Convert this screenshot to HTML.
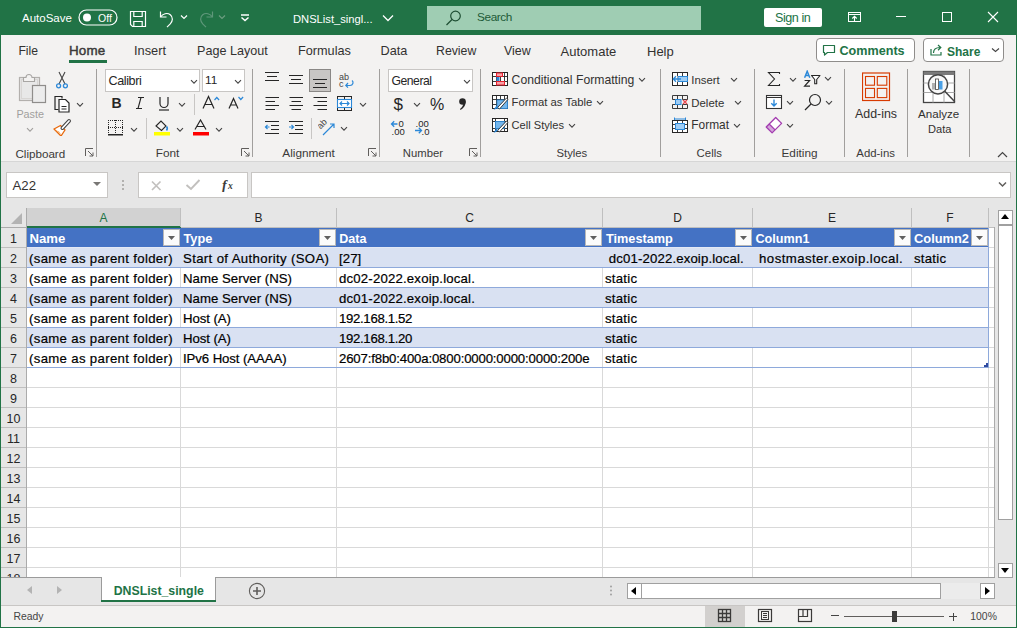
<!DOCTYPE html>
<html><head><meta charset="utf-8"><style>
html,body{margin:0;padding:0}
body{width:1017px;height:628px;position:relative;overflow:hidden;background:#f3f2f1;font-family:"Liberation Sans",sans-serif}
body>div,body>svg{position:absolute;margin:0}
body>div.c{-webkit-text-stroke:0.2px currentColor}
</style></head><body>
<div style="left:0px;top:0px;width:1017px;height:35px;background:#217346"></div>
<div style="left:22px;top:12.77px;font-size:11.5px;line-height:11.5px;color:#ffffff;font-weight:normal;white-space:pre;">AutoSave</div>
<svg style="left:78px;top:9px;" width="40" height="17" viewBox="0 0 40 17"><rect x="1" y="1" width="38" height="15" rx="7.5" fill="none" stroke="#fff" stroke-width="1.2"/><circle cx="9" cy="8.5" r="4" fill="#fff"/><text x="20" y="12.5" font-size="10.5" fill="#fff" font-family="Liberation Sans">Off</text></svg>
<svg style="left:129px;top:10px;" width="18" height="18" viewBox="0 0 18 18"><path d="M1.5 1.5h15v15h-13l-2-2z" fill="none" stroke="#fff" stroke-width="1.2"/><path d="M4.8 1.5v5h8.4v-5M4.8 16.5v-5h8.4v5" fill="none" stroke="#fff" stroke-width="1.2"/></svg>
<svg style="left:158px;top:10px;" width="18" height="18" viewBox="0 0 18 18"><path d="M2.5 1.5v5.5h6" fill="none" stroke="#fff" stroke-width="1.2"/><path d="M2.8 6.8c1.8-3 6.5-4.5 9.5-2s2.5 6.5 0 9l-3.3 3.3" fill="none" stroke="#fff" stroke-width="1.2"/></svg>
<svg style="left:180px;top:14px;" width="8" height="6" viewBox="0 0 8 6"><path d="M1 1.5l3 3 3-3" fill="none" stroke="#fff" stroke-width="1.2"/></svg>
<svg style="left:197px;top:10px;" width="18" height="18" viewBox="0 0 18 18"><path d="M15.5 1.5v5.5h-6" fill="none" stroke="#5f977a" stroke-width="1.2"/><path d="M15.2 6.8c-1.8-3-6.5-4.5-9.5-2s-2.5 6.5 0 9l3.3 3.3" fill="none" stroke="#5f977a" stroke-width="1.2"/></svg>
<svg style="left:218px;top:14px;" width="8" height="6" viewBox="0 0 8 6"><path d="M1 1.5l3 3 3-3" fill="none" stroke="#6c9d80" stroke-width="1.2"/></svg>
<svg style="left:240px;top:13px;" width="10" height="10" viewBox="0 0 10 10"><path d="M1 2h8" stroke="#fff" stroke-width="1.5"/><path d="M1.5 4.5l3.5 3 3.5-3" fill="none" stroke="#fff" stroke-width="1.5"/></svg>
<div style="left:293px;top:14.02px;font-size:11.2px;line-height:11.2px;color:#ffffff;font-weight:normal;white-space:pre;">DNSList_singl...</div>
<svg style="left:382px;top:14px;" width="12" height="8" viewBox="0 0 12 8"><path d="M1 1.5l5 5 5-5" fill="none" stroke="#fff" stroke-width="1.3"/></svg>
<div style="left:427px;top:6px;width:274px;height:24px;background:#9fcdb3"></div>
<svg style="left:445px;top:10px;" width="18" height="16" viewBox="0 0 18 16"><circle cx="10.5" cy="6" r="4.8" fill="none" stroke="#1e4d33" stroke-width="1.2"/><path d="M7 9.5l-5.5 5.5" stroke="#1e4d33" stroke-width="1.3"/></svg>
<div style="left:477px;top:12.01px;font-size:11.8px;line-height:11.8px;color:#1d5a37;font-weight:normal;white-space:pre;letter-spacing:-0.4px">Search</div>
<div style="left:764px;top:8px;width:58px;height:19px;background:#fff;border-radius:2px"></div>
<div style="left:775px;top:12.13px;font-size:12.6px;line-height:12.6px;color:#217346;font-weight:normal;white-space:pre;letter-spacing:-0.45px">Sign in</div>
<svg style="left:847px;top:11px;" width="15" height="12" viewBox="0 0 15 12"><rect x="1.5" y="1.5" width="12" height="9" fill="none" stroke="#fff" stroke-width="1"/><path d="M1.5 3.5h12" stroke="#fff" stroke-width="1"/><path d="M7.5 10v-4.5M5.3 7.5l2.2-2.2 2.2 2.2" fill="none" stroke="#fff" stroke-width="1.1"/></svg>
<div style="left:896px;top:16px;width:10px;height:1px;background:#fff"></div>
<div style="left:942px;top:12px;width:10px;height:10px;border:1px solid #fff;box-sizing:border-box"></div>
<svg style="left:987px;top:11px;" width="12" height="12" viewBox="0 0 12 12"><path d="M1 1l10 10M11 1L1 11" stroke="#fff" stroke-width="1.1"/></svg>
<div style="left:0px;top:35px;width:1px;height:593px;background:#217346"></div>
<div style="left:1016px;top:35px;width:1px;height:593px;background:#217346"></div>
<div style="left:0px;top:627px;width:1017px;height:1px;background:#217346"></div>
<div style="left:18.4px;top:45.27px;font-size:12.2px;line-height:12.2px;color:#323130;font-weight:normal;white-space:pre;">File</div>
<div style="left:69px;top:44.26px;font-size:13.4px;line-height:13.4px;color:#3b3a39;font-weight:normal;white-space:pre;-webkit-text-stroke:0.45px #3b3a39;letter-spacing:0.15px">Home</div>
<div style="left:134px;top:44.76px;font-size:12.8px;line-height:12.8px;color:#323130;font-weight:normal;white-space:pre;">Insert</div>
<div style="left:197px;top:44.93px;font-size:12.6px;line-height:12.6px;color:#323130;font-weight:normal;white-space:pre;">Page Layout</div>
<div style="left:298px;top:44.85px;font-size:12.7px;line-height:12.7px;color:#323130;font-weight:normal;white-space:pre;">Formulas</div>
<div style="left:380.5px;top:44.85px;font-size:12.7px;line-height:12.7px;color:#323130;font-weight:normal;white-space:pre;">Data</div>
<div style="left:436px;top:45.19px;font-size:12.3px;line-height:12.3px;color:#323130;font-weight:normal;white-space:pre;">Review</div>
<div style="left:504px;top:45.10px;font-size:12.4px;line-height:12.4px;color:#323130;font-weight:normal;white-space:pre;">View</div>
<div style="left:560.6px;top:44.60px;font-size:13px;line-height:13px;color:#323130;font-weight:normal;white-space:pre;">Automate</div>
<div style="left:647px;top:44.60px;font-size:13px;line-height:13px;color:#323130;font-weight:normal;white-space:pre;">Help</div>
<div style="left:69px;top:60px;width:38px;height:3px;background:#217346"></div>
<div style="left:816px;top:38px;width:98px;height:23px;border:1px solid #8f8d8b;border-radius:4px;background:#fff;box-sizing:border-box;width:99px;height:24px"></div>
<svg style="left:822px;top:44px;" width="14" height="12" viewBox="0 0 14 12"><path d="M1.5 1.5h11v7h-7l-3 2.5v-2.5h-1z" fill="none" stroke="#217346" stroke-width="1.2" stroke-linejoin="round"/></svg>
<div style="left:839.5px;top:45.33px;font-size:12.6px;line-height:12.6px;color:#217346;font-weight:bold;white-space:pre;">Comments</div>
<div style="left:923px;top:38px;width:81px;height:24px;border:1px solid #8f8d8b;border-radius:4px;background:#fff;box-sizing:border-box"></div>
<svg style="left:930px;top:44px;" width="14" height="12" viewBox="0 0 14 12"><path d="M1 5v6h10v-3" fill="none" stroke="#217346" stroke-width="1.2"/><path d="M3.5 9c0-4 3-5.5 6.5-5.5M8 1l2.8 2.6-2.8 2.6" fill="none" stroke="#217346" stroke-width="1.2"/></svg>
<div style="left:947px;top:45.84px;font-size:12px;line-height:12px;color:#217346;font-weight:bold;white-space:pre;">Share</div>
<svg style="left:991px;top:47px;" width="9" height="6" viewBox="0 0 9 6"><path d="M1 1.5l3.5 3 3.5-3" fill="none" stroke="#444" stroke-width="1.1"/></svg>
<div style="left:96px;top:69px;width:1px;height:88px;background:#a19f9d"></div>
<div style="left:252px;top:69px;width:1px;height:88px;background:#a19f9d"></div>
<div style="left:379px;top:69px;width:1px;height:88px;background:#a19f9d"></div>
<div style="left:480px;top:69px;width:1px;height:88px;background:#a19f9d"></div>
<div style="left:660px;top:69px;width:1px;height:88px;background:#a19f9d"></div>
<div style="left:754px;top:69px;width:1px;height:88px;background:#a19f9d"></div>
<div style="left:844px;top:69px;width:1px;height:88px;background:#a19f9d"></div>
<div style="left:907px;top:69px;width:1px;height:88px;background:#a19f9d"></div>
<div style="left:969px;top:69px;width:1px;height:88px;background:#a19f9d"></div>
<svg style="left:18px;top:72px;" width="30" height="32" viewBox="0 0 30 32"><rect x="1.5" y="5.5" width="20" height="23" fill="#e8e8e8" stroke="#b3b0ad" stroke-width="1.2"/><rect x="3.5" y="7.5" width="16" height="19" fill="none" stroke="#d8d6d4" stroke-width="1"/><path d="M5.5 9.5h11v-4h-2.5a3 3 0 0 0-6 0H5.5z" fill="#f3f2f1" stroke="#a8a6a4" stroke-width="1.1"/><rect x="14.5" y="13.5" width="13" height="17" fill="#ececec" stroke="#8f8d8b" stroke-width="1.2"/></svg>
<div style="left:16.4px;top:108.86px;font-size:10.8px;line-height:10.8px;color:#a19f9d;font-weight:normal;white-space:pre;">Paste</div>
<svg style="left:26px;top:127px;" width="8" height="6" viewBox="0 0 8 6"><path d="M1 1.2l3 3 3-3" fill="none" stroke="#a19f9d" stroke-width="1.1"/></svg>
<svg style="left:56px;top:71px;" width="12" height="18" viewBox="0 0 12 18"><path d="M3 1l6 12M9 1l-6 12" stroke="#444" stroke-width="1.1"/><circle cx="2.6" cy="14.8" r="2" fill="none" stroke="#2b88d8" stroke-width="1.3"/><circle cx="9.4" cy="14.8" r="2" fill="none" stroke="#2b88d8" stroke-width="1.3"/></svg>
<svg style="left:54px;top:95px;" width="17" height="18" viewBox="0 0 17 18"><path d="M8 3.5V1.5H1v13h3.5" fill="none" stroke="#262626" stroke-width="1.2"/><path d="M5 4.5h6.5l3.5 3.5V17H5z" fill="#fff" stroke="#262626" stroke-width="1.2"/><path d="M7.5 11.5h5M7.5 14h5" stroke="#262626" stroke-width="1"/></svg>
<svg style="left:76px;top:102px;" width="8" height="6" viewBox="0 0 8 6"><path d="M1 1.2l3 3 3-3" fill="none" stroke="#444" stroke-width="1.1"/></svg>
<svg style="left:53px;top:118px;" width="19" height="18" viewBox="0 0 19 18"><path d="M1 11l6.5-3.5 4.5 4.5-4 6z" fill="#fff" stroke="#e8690c" stroke-width="1.3" stroke-linejoin="round"/><path d="M2 11.8l4 1.8 2.5 3.5z" fill="#f3a85f"/><path d="M9.5 10l6.5-7" stroke="#444" stroke-width="4" stroke-linecap="round"/><path d="M9.5 10l6.5-7" stroke="#fff" stroke-width="1.8" stroke-linecap="round"/></svg>
<div style="left:15.4px;top:147.74px;font-size:11.65px;line-height:11.65px;color:#3b3a39;font-weight:normal;white-space:pre;">Clipboard</div>
<svg style="left:85px;top:148px;" width="9" height="9" viewBox="0 0 9 9"><path d="M0.5 8V0.5H8" fill="none" stroke="#605e5c" stroke-width="1"/><path d="M3 3l5 5M8 4.5V8H4.5" fill="none" stroke="#605e5c" stroke-width="1"/></svg>
<div style="left:105px;top:69px;width:95px;height:23px;background:#fff;border:1px solid #c8c6c4;box-sizing:border-box"></div>
<div style="left:108.5px;top:75.03px;font-size:12.6px;line-height:12.6px;color:#262626;font-weight:normal;white-space:pre;letter-spacing:-0.4px">Calibri</div>
<svg style="left:190px;top:79px;" width="8" height="6" viewBox="0 0 8 6"><path d="M1 1.2l3 3 3-3" fill="none" stroke="#444" stroke-width="1.1"/></svg>
<div style="left:202px;top:69px;width:43px;height:23px;background:#fff;border:1px solid #c8c6c4;box-sizing:border-box"></div>
<div style="left:205px;top:75.31px;font-size:11.8px;line-height:11.8px;color:#262626;font-weight:normal;white-space:pre;">11</div>
<svg style="left:234px;top:79px;" width="8" height="6" viewBox="0 0 8 6"><path d="M1 1.2l3 3 3-3" fill="none" stroke="#444" stroke-width="1.1"/></svg>
<svg style="left:111px;top:96px;" width="12" height="14" viewBox="0 0 12 14"><text x="0.5" y="12" font-family="Liberation Sans" font-weight="bold" font-size="14" fill="#262626">B</text></svg>
<svg style="left:135px;top:96px;" width="10" height="14" viewBox="0 0 10 14"><path d="M3 1.5h6M1 12.5h6M6 1.5l-3 11" fill="none" stroke="#262626" stroke-width="1.1"/></svg>
<svg style="left:158px;top:96px;" width="12" height="16" viewBox="0 0 12 16"><path d="M2 1v6.5a4 4 0 0 0 8 0V1" fill="none" stroke="#262626" stroke-width="1.2"/><path d="M1 14h10" stroke="#262626" stroke-width="1.2"/></svg>
<svg style="left:178px;top:102px;" width="8" height="6" viewBox="0 0 8 6"><path d="M1 1.2l3 3 3-3" fill="none" stroke="#444" stroke-width="1.1"/></svg>
<div style="left:194px;top:94px;width:1px;height:21px;background:#c8c6c4"></div>
<svg style="left:202px;top:95px;" width="18" height="15" viewBox="0 0 18 15"><path d="M1 13.5l5.5-12 5.5 12M3 9.5h7" fill="none" stroke="#262626" stroke-width="1.2"/><path d="M12.5 5l2.3-2.5 2.3 2.5" fill="none" stroke="#2b88d8" stroke-width="1.2"/></svg>
<svg style="left:228px;top:95px;" width="16" height="15" viewBox="0 0 16 15"><path d="M1 13.5l4.5-10 4.5 10M2.6 10h6" fill="none" stroke="#262626" stroke-width="1.2"/><path d="M10.5 2l2.3 2.5 2.3-2.5" fill="none" stroke="#2b88d8" stroke-width="1.2"/></svg>
<svg style="left:107px;top:119px;" width="17" height="17" viewBox="0 0 17 17"><g fill="#262626"><rect x="1" y="1" width="1" height="1"/><rect x="1" y="1" width="1" height="1"/><rect x="15" y="1" width="1" height="1"/><rect x="1" y="8" width="1" height="1"/><rect x="8" y="1" width="1" height="1"/><rect x="3" y="1" width="1" height="1"/><rect x="1" y="3" width="1" height="1"/><rect x="15" y="3" width="1" height="1"/><rect x="3" y="8" width="1" height="1"/><rect x="8" y="3" width="1" height="1"/><rect x="5" y="1" width="1" height="1"/><rect x="1" y="5" width="1" height="1"/><rect x="15" y="5" width="1" height="1"/><rect x="5" y="8" width="1" height="1"/><rect x="8" y="5" width="1" height="1"/><rect x="7" y="1" width="1" height="1"/><rect x="1" y="7" width="1" height="1"/><rect x="15" y="7" width="1" height="1"/><rect x="7" y="8" width="1" height="1"/><rect x="8" y="7" width="1" height="1"/><rect x="9" y="1" width="1" height="1"/><rect x="1" y="9" width="1" height="1"/><rect x="15" y="9" width="1" height="1"/><rect x="9" y="8" width="1" height="1"/><rect x="8" y="9" width="1" height="1"/><rect x="11" y="1" width="1" height="1"/><rect x="1" y="11" width="1" height="1"/><rect x="15" y="11" width="1" height="1"/><rect x="11" y="8" width="1" height="1"/><rect x="8" y="11" width="1" height="1"/><rect x="13" y="1" width="1" height="1"/><rect x="1" y="13" width="1" height="1"/><rect x="15" y="13" width="1" height="1"/><rect x="13" y="8" width="1" height="1"/><rect x="8" y="13" width="1" height="1"/><rect x="15" y="1" width="1" height="1"/><rect x="1" y="15" width="1" height="1"/><rect x="15" y="15" width="1" height="1"/><rect x="15" y="8" width="1" height="1"/><rect x="8" y="15" width="1" height="1"/></g><rect x="1" y="15" width="15" height="1.5" fill="#262626"/></svg>
<svg style="left:130px;top:127px;" width="8" height="6" viewBox="0 0 8 6"><path d="M1 1.2l3 3 3-3" fill="none" stroke="#444" stroke-width="1.1"/></svg>
<div style="left:146px;top:118px;width:1px;height:21px;background:#c8c6c4"></div>
<svg style="left:153px;top:120px;" width="18" height="16" viewBox="0 0 18 16"><path d="M3 6l5-5 5 5-4.5 4.5z" fill="none" stroke="#262626" stroke-width="1.1"/><path d="M13.5 6.5c1 1 1 2.5 0 4" fill="none" stroke="#2b88d8" stroke-width="1.6"/><rect x="1" y="12" width="16" height="3.5" fill="#ffff00"/></svg>
<svg style="left:176px;top:127px;" width="8" height="6" viewBox="0 0 8 6"><path d="M1 1.2l3 3 3-3" fill="none" stroke="#444" stroke-width="1.1"/></svg>
<svg style="left:192px;top:119px;" width="18" height="17" viewBox="0 0 18 17"><path d="M3 10.5l5.5-9.5 5.5 9.5M5 7.5h7" fill="none" stroke="#262626" stroke-width="1.2"/><rect x="1" y="13" width="16" height="3.5" fill="#ff0000"/></svg>
<svg style="left:215px;top:127px;" width="8" height="6" viewBox="0 0 8 6"><path d="M1 1.2l3 3 3-3" fill="none" stroke="#444" stroke-width="1.1"/></svg>
<div style="left:155.7px;top:147.61px;font-size:11.8px;line-height:11.8px;color:#3b3a39;font-weight:normal;white-space:pre;">Font</div>
<svg style="left:241px;top:148px;" width="9" height="9" viewBox="0 0 9 9"><path d="M0.5 8V0.5H8" fill="none" stroke="#605e5c" stroke-width="1"/><path d="M3 3l5 5M8 4.5V8H4.5" fill="none" stroke="#605e5c" stroke-width="1"/></svg>
<svg style="left:264px;top:70px;" width="16" height="16" viewBox="0 0 16 16"><path d="M1 2.5h14" stroke="#262626" stroke-width="1"/><path d="M3 6.5h10" stroke="#262626" stroke-width="1"/><path d="M1 10.5h14" stroke="#262626" stroke-width="1"/></svg>
<svg style="left:288px;top:70px;" width="16" height="16" viewBox="0 0 16 16"><path d="M1 5.5h14" stroke="#262626" stroke-width="1"/><path d="M3 9.5h10" stroke="#262626" stroke-width="1"/><path d="M1 13.5h14" stroke="#262626" stroke-width="1"/></svg>
<div style="left:309px;top:69px;width:22px;height:23px;background:#c8c6c4;border:1px solid #8a8886;box-sizing:border-box"></div>
<svg style="left:312px;top:72px;" width="16" height="16" viewBox="0 0 16 16"><path d="M1 7.5h14" stroke="#262626" stroke-width="1"/><path d="M3 11.5h10" stroke="#262626" stroke-width="1"/><path d="M1 15.5h14" stroke="#262626" stroke-width="1"/></svg>
<svg style="left:338px;top:72px;" width="17" height="17" viewBox="0 0 17 17"><text x="1" y="7.5" font-family="Liberation Sans" font-size="9" fill="#444">ab</text><text x="1" y="15" font-family="Liberation Sans" font-size="9" fill="#444">c</text><path d="M14 8.5c2 1.5 1 5-2 5H8M10 11l-2.2 2.5 2.2 2.2" fill="none" stroke="#2b88d8" stroke-width="1.2"/></svg>
<svg style="left:264px;top:95px;" width="16" height="16" viewBox="0 0 16 16"><path d="M1.5 2.5h13.5" stroke="#262626" stroke-width="1"/><path d="M1.5 6.5h9.5" stroke="#262626" stroke-width="1"/><path d="M1.5 10.5h13.5" stroke="#262626" stroke-width="1"/><path d="M1.5 14.5h9.5" stroke="#262626" stroke-width="1"/></svg>
<svg style="left:288px;top:95px;" width="16" height="16" viewBox="0 0 16 16"><path d="M1.5 2.5h13.5" stroke="#262626" stroke-width="1"/><path d="M3.5 6.5h9.5" stroke="#262626" stroke-width="1"/><path d="M1.5 10.5h13.5" stroke="#262626" stroke-width="1"/><path d="M3.5 14.5h9.5" stroke="#262626" stroke-width="1"/></svg>
<svg style="left:312px;top:95px;" width="16" height="16" viewBox="0 0 16 16"><path d="M1.5 2.5h13.5" stroke="#262626" stroke-width="1"/><path d="M5.5 6.5h9.5" stroke="#262626" stroke-width="1"/><path d="M1.5 10.5h13.5" stroke="#262626" stroke-width="1"/><path d="M5.5 14.5h9.5" stroke="#262626" stroke-width="1"/></svg>
<svg style="left:336px;top:95px;" width="17" height="17" viewBox="0 0 17 17"><rect x="1.5" y="1.5" width="14" height="14" fill="none" stroke="#262626" stroke-width="1"/><path d="M1.5 4.5h14M1.5 12.5h14M8.5 1.5v3M8.5 12.5v3" stroke="#262626" stroke-width="1"/><rect x="1.5" y="4.5" width="14" height="8" fill="#fff" stroke="#2b88d8" stroke-width="1.1"/><path d="M4 8.5h9M6 6.5l-2 2 2 2M11 6.5l2 2-2 2" fill="none" stroke="#2b88d8" stroke-width="1.2"/></svg>
<svg style="left:359px;top:102px;" width="8" height="6" viewBox="0 0 8 6"><path d="M1 1.2l3 3 3-3" fill="none" stroke="#444" stroke-width="1.1"/></svg>
<svg style="left:264px;top:119px;" width="16" height="16" viewBox="0 0 16 16"><path d="M1 2.5h14M7 6.5h8M7 10.5h8M1 14.5h14" stroke="#262626" stroke-width="1.1"/><path d="M5.5 8H1.5M3.5 6l-2 2 2 2" fill="none" stroke="#2b88d8" stroke-width="1.2"/></svg>
<svg style="left:288px;top:119px;" width="16" height="16" viewBox="0 0 16 16"><path d="M1 2.5h14M7 6.5h8M7 10.5h8M1 14.5h14" stroke="#262626" stroke-width="1.1"/><path d="M1 8h4.5M3.5 6l2 2-2 2" fill="none" stroke="#2b88d8" stroke-width="1.2"/></svg>
<div style="left:311px;top:118px;width:1px;height:21px;background:#c8c6c4"></div>
<svg style="left:318px;top:119px;" width="18" height="17" viewBox="0 0 18 17"><text x="0" y="0" font-family="Liberation Sans" font-size="9" fill="#444" transform="translate(2.5,10.5) rotate(-45)">ab</text><path d="M5 16l11-11M12 5h4v4" fill="none" stroke="#2b88d8" stroke-width="1.2"/></svg>
<svg style="left:340px;top:126px;" width="8" height="6" viewBox="0 0 8 6"><path d="M1 1.2l3 3 3-3" fill="none" stroke="#444" stroke-width="1.1"/></svg>
<div style="left:282.3px;top:147.61px;font-size:11.8px;line-height:11.8px;color:#3b3a39;font-weight:normal;white-space:pre;">Alignment</div>
<svg style="left:368px;top:148px;" width="9" height="9" viewBox="0 0 9 9"><path d="M0.5 8V0.5H8" fill="none" stroke="#605e5c" stroke-width="1"/><path d="M3 3l5 5M8 4.5V8H4.5" fill="none" stroke="#605e5c" stroke-width="1"/></svg>
<div style="left:388px;top:69px;width:85px;height:23px;background:#fff;border:1px solid #c8c6c4;box-sizing:border-box"></div>
<div style="left:391.4px;top:74.67px;font-size:12.2px;line-height:12.2px;color:#262626;font-weight:normal;white-space:pre;letter-spacing:-0.45px">General</div>
<svg style="left:463px;top:79px;" width="8" height="6" viewBox="0 0 8 6"><path d="M1 1.2l3 3 3-3" fill="none" stroke="#444" stroke-width="1.1"/></svg>
<svg style="left:393px;top:95px;" width="12" height="18" viewBox="0 0 12 18"><text x="0.5" y="14.5" font-family="Liberation Sans" font-size="17" fill="#262626">$</text></svg>
<svg style="left:413px;top:102px;" width="8" height="6" viewBox="0 0 8 6"><path d="M1 1.2l3 3 3-3" fill="none" stroke="#444" stroke-width="1.1"/></svg>
<svg style="left:430px;top:96px;" width="17" height="16" viewBox="0 0 17 16"><text x="0" y="14" font-family="Liberation Sans" font-size="16" fill="#262626">%</text></svg>
<svg style="left:457px;top:97px;" width="11" height="15" viewBox="0 0 11 15"><circle cx="5.5" cy="4.5" r="3.3" fill="#262626"/><path d="M8.6 4.5c0.3 3.5-1.5 6.5-5 8.5l-0.6-0.9c2.5-1.8 3.5-4 3.2-6.5z" fill="#262626"/></svg>
<svg style="left:390px;top:118px;" width="18" height="17" viewBox="0 0 18 17"><path d="M1.5 6h6M4.2 3.3L1.5 6l2.7 2.7" fill="none" stroke="#2b88d8" stroke-width="1.3"/><text x="8.5" y="9" font-family="Liberation Sans" font-size="9.5" fill="#262626">0</text><text x="1.5" y="16.5" font-family="Liberation Sans" font-size="9.5" fill="#262626">.00</text></svg>
<svg style="left:414px;top:118px;" width="18" height="17" viewBox="0 0 18 17"><text x="1.5" y="8.5" font-family="Liberation Sans" font-size="9.5" fill="#262626">.00</text><path d="M1 12.5h6.5M4.8 9.8l2.7 2.7-2.7 2.7" fill="none" stroke="#2b88d8" stroke-width="1.3"/><text x="7.5" y="16.5" font-family="Liberation Sans" font-size="9.5" fill="#262626">.0</text></svg>
<div style="left:402.8px;top:148.03px;font-size:11.3px;line-height:11.3px;color:#3b3a39;font-weight:normal;white-space:pre;">Number</div>
<svg style="left:469px;top:148px;" width="9" height="9" viewBox="0 0 9 9"><path d="M0.5 8V0.5H8" fill="none" stroke="#605e5c" stroke-width="1"/><path d="M3 3l5 5M8 4.5V8H4.5" fill="none" stroke="#605e5c" stroke-width="1"/></svg>
<svg style="left:492px;top:72px;" width="17" height="15" viewBox="0 0 17 15"><rect x="0.5" y="0.5" width="15" height="13" fill="#fff" stroke="#262626" stroke-width="1"/><path d="M0.5 4.5h15M0.5 9.5h15M4.5 0.5v13M8.5 0.5v13M12.5 0.5v13" stroke="#262626" stroke-width="0.9"/><rect x="4.5" y="1" width="6" height="3.5" fill="#f7a1a7" stroke="#e8212e" stroke-width="1"/><rect x="4.5" y="5" width="3" height="4" fill="#2b88d8"/><rect x="4.5" y="9.5" width="8" height="3.5" fill="#f7a1a7" stroke="#e8212e" stroke-width="1"/></svg>
<div style="left:511.6px;top:73.87px;font-size:12.2px;line-height:12.2px;color:#323130;font-weight:normal;white-space:pre;">Conditional Formatting</div>
<svg style="left:638px;top:77px;" width="8" height="6" viewBox="0 0 8 6"><path d="M1 1.2l3 3 3-3" fill="none" stroke="#444" stroke-width="1.1"/></svg>
<svg style="left:492px;top:95px;" width="17" height="15" viewBox="0 0 17 15"><rect x="0.5" y="0.5" width="15" height="13" fill="#fff" stroke="#262626" stroke-width="1"/><path d="M0.5 4.5h15M0.5 9.5h15M4.5 0.5v13M8.5 0.5v13M12.5 0.5v13" stroke="#262626" stroke-width="0.9"/><rect x="5" y="5" width="10.5" height="8.5" fill="#74b6ec" stroke="#2b88d8" stroke-width="0.8"/><path d="M5.5 12.5l9-9.5 1.5 1.3-8.5 9.7z" fill="#fff" stroke="#262626" stroke-width="0.9"/><path d="M1.5 14.5c1.5 0 3-0.5 4.5-2.5l-1.5-1.3c-1.5 1.3-1.5 3-3 3.8z" fill="#2b88d8"/></svg>
<div style="left:511.6px;top:97.03px;font-size:11.3px;line-height:11.3px;color:#323130;font-weight:normal;white-space:pre;">Format as Table</div>
<svg style="left:596px;top:100px;" width="8" height="6" viewBox="0 0 8 6"><path d="M1 1.2l3 3 3-3" fill="none" stroke="#444" stroke-width="1.1"/></svg>
<svg style="left:492px;top:118px;" width="17" height="15" viewBox="0 0 17 15"><rect x="0.5" y="0.5" width="15" height="13" fill="#fff" stroke="#262626" stroke-width="1"/><path d="M0.5 3.5h15M0.5 10.5h15M3.5 0.5v13M12.5 0.5v13" stroke="#262626" stroke-width="0.9"/><rect x="3.5" y="3.5" width="9" height="7" fill="#74b6ec" stroke="#2b88d8" stroke-width="0.8"/><path d="M5.5 12.5l9-9.5 1.5 1.3-8.5 9.7z" fill="#fff" stroke="#262626" stroke-width="0.9"/><path d="M1.5 14.5c1.5 0 3-0.5 4.5-2.5l-1.5-1.3c-1.5 1.3-1.5 3-3 3.8z" fill="#2b88d8"/></svg>
<div style="left:511.6px;top:120.40px;font-size:11.1px;line-height:11.1px;color:#323130;font-weight:normal;white-space:pre;">Cell Styles</div>
<svg style="left:568px;top:123px;" width="8" height="6" viewBox="0 0 8 6"><path d="M1 1.2l3 3 3-3" fill="none" stroke="#444" stroke-width="1.1"/></svg>
<div style="left:556.5px;top:148.03px;font-size:11.3px;line-height:11.3px;color:#3b3a39;font-weight:normal;white-space:pre;">Styles</div>
<svg style="left:672px;top:72px;" width="17" height="15" viewBox="0 0 17 15"><rect x="0.5" y="0.5" width="15" height="13" fill="#fff" stroke="#262626" stroke-width="1"/><path d="M0.5 4.5h15M0.5 9.5h15M5.5 0.5v13M10.5 0.5v13" stroke="#262626" stroke-width="0.9"/><rect x="6" y="4.5" width="9.5" height="5" fill="#9fcdf5" stroke="#2b88d8" stroke-width="1"/><rect x="1" y="4" width="4.5" height="6" fill="#fff"/><path d="M1 7h8M4 4.3L1.3 7 4 9.7" fill="none" stroke="#2b88d8" stroke-width="1.3"/></svg>
<div style="left:691.3px;top:75.15px;font-size:11.4px;line-height:11.4px;color:#323130;font-weight:normal;white-space:pre;">Insert</div>
<svg style="left:730px;top:77px;" width="8" height="6" viewBox="0 0 8 6"><path d="M1 1.2l3 3 3-3" fill="none" stroke="#444" stroke-width="1.1"/></svg>
<svg style="left:672px;top:95px;" width="17" height="15" viewBox="0 0 17 15"><path d="M0.5 4.5V0.5h15v4M0.5 9.5v4h15v-4M0.5 4.5h4M0.5 9.5h4M5.5 0.5v4M10.5 0.5v4M5.5 9.5v4M10.5 9.5v4M10.5 4.5h5M10.5 9.5h5" fill="none" stroke="#262626" stroke-width="0.9"/><rect x="3.5" y="4.5" width="5.5" height="5" fill="#9fcdf5" stroke="#2b88d8" stroke-width="1"/><path d="M11 5l4 4M15 5l-4 4" stroke="#e8484f" stroke-width="1.2"/></svg>
<div style="left:691.3px;top:97.65px;font-size:11.4px;line-height:11.4px;color:#323130;font-weight:normal;white-space:pre;">Delete</div>
<svg style="left:734px;top:100px;" width="8" height="6" viewBox="0 0 8 6"><path d="M1 1.2l3 3 3-3" fill="none" stroke="#444" stroke-width="1.1"/></svg>
<svg style="left:672px;top:117px;" width="17" height="17" viewBox="0 0 17 17"><path d="M3 2h10M2.5 0.5v3M13.5 0.5v3" fill="none" stroke="#2b88d8" stroke-width="1"/><rect x="0.5" y="3.5" width="15" height="12" fill="#fff" stroke="#262626" stroke-width="1"/><path d="M0.5 7.5h15M0.5 11.5h15M5.5 3.5v12M10.5 3.5v12" stroke="#262626" stroke-width="0.9"/><rect x="3.5" y="6.5" width="9" height="6" fill="#9fcdf5" stroke="#2b88d8" stroke-width="1"/></svg>
<div style="left:691.3px;top:119.53px;font-size:11.9px;line-height:11.9px;color:#323130;font-weight:normal;white-space:pre;">Format</div>
<svg style="left:733px;top:123px;" width="8" height="6" viewBox="0 0 8 6"><path d="M1 1.2l3 3 3-3" fill="none" stroke="#444" stroke-width="1.1"/></svg>
<div style="left:696.6px;top:147.95px;font-size:11.4px;line-height:11.4px;color:#3b3a39;font-weight:normal;white-space:pre;">Cells</div>
<svg style="left:767px;top:71px;" width="14" height="16" viewBox="0 0 14 16"><path d="M12.5 3V1.5h-11l6 6.5-6 6.5h11V13" fill="none" stroke="#262626" stroke-width="1.1"/></svg>
<svg style="left:789px;top:77px;" width="8" height="6" viewBox="0 0 8 6"><path d="M1 1.2l3 3 3-3" fill="none" stroke="#444" stroke-width="1.1"/></svg>
<svg style="left:803px;top:70px;" width="19" height="18" viewBox="0 0 19 18"><path d="M1.6 7.8L4.2 1.3l2.6 6.5M2.6 5.6h3.2" fill="none" stroke="#2b88d8" stroke-width="1.5"/><path d="M1.6 10.5h5L1.6 16.2h5.4" fill="none" stroke="#262626" stroke-width="1.2"/><path d="M8.5 5.5h8.5l-3.3 4v4.3h-2v-4.3z" fill="#fff" stroke="#262626" stroke-width="1.1" stroke-linejoin="round"/></svg>
<svg style="left:824px;top:76px;" width="8" height="6" viewBox="0 0 8 6"><path d="M1 1.2l3 3 3-3" fill="none" stroke="#444" stroke-width="1.1"/></svg>
<svg style="left:765px;top:94px;" width="18" height="16" viewBox="0 0 18 16"><rect x="1.5" y="1.5" width="15" height="13" fill="#fff" stroke="#333" stroke-width="1.1"/><path d="M1.5 3.5h15" stroke="#333" stroke-width="1"/><path d="M9 5.5v6.5M6.3 9.3L9 12l2.7-2.7" fill="none" stroke="#2b88d8" stroke-width="1.4"/></svg>
<svg style="left:786px;top:100px;" width="8" height="6" viewBox="0 0 8 6"><path d="M1 1.2l3 3 3-3" fill="none" stroke="#444" stroke-width="1.1"/></svg>
<svg style="left:804px;top:93px;" width="18" height="18" viewBox="0 0 18 18"><circle cx="11" cy="7" r="5.5" fill="none" stroke="#262626" stroke-width="1.2"/><path d="M7 11l-6 6" stroke="#262626" stroke-width="1.3"/></svg>
<svg style="left:825px;top:100px;" width="8" height="6" viewBox="0 0 8 6"><path d="M1 1.2l3 3 3-3" fill="none" stroke="#444" stroke-width="1.1"/></svg>
<svg style="left:765px;top:116px;" width="18" height="18" viewBox="0 0 18 18"><path d="M1.2 11L10.7 1.5 16.6 7.4 7.1 16.9z" fill="#fff"/><path d="M1.2 11L4.2 8 10.1 13.9 7.1 16.9z" fill="#d3a5da"/><path d="M1.2 11L10.7 1.5 16.6 7.4 7.1 16.9zM4.2 8l5.9 5.9" fill="none" stroke="#a33cb0" stroke-width="1.3" stroke-linejoin="round"/></svg>
<svg style="left:786px;top:123px;" width="8" height="6" viewBox="0 0 8 6"><path d="M1 1.2l3 3 3-3" fill="none" stroke="#444" stroke-width="1.1"/></svg>
<div style="left:781.5px;top:147.51px;font-size:11.8px;line-height:11.8px;color:#3b3a39;font-weight:normal;white-space:pre;">Editing</div>
<svg style="left:862px;top:72px;" width="29" height="30" viewBox="0 0 29 30"><rect x="0.5" y="1" width="27" height="27.5" fill="none" stroke="#d83b01" stroke-width="1.2"/><rect x="3.5" y="4.5" width="9" height="8.7" fill="none" stroke="#d83b01" stroke-width="1.1"/><rect x="15.3" y="4.5" width="9.5" height="8.7" fill="none" stroke="#d83b01" stroke-width="1.1"/><rect x="3.5" y="16.4" width="9" height="9.2" fill="none" stroke="#d83b01" stroke-width="1.1"/><rect x="15.3" y="16.4" width="9.5" height="9.2" fill="none" stroke="#d83b01" stroke-width="1.1"/></svg>
<div style="left:855px;top:107.80px;font-size:12.4px;line-height:12.4px;color:#323130;font-weight:normal;white-space:pre;">Add-ins</div>
<div style="left:856.3px;top:148.25px;font-size:11.4px;line-height:11.4px;color:#3b3a39;font-weight:normal;white-space:pre;">Add-ins</div>
<svg style="left:922px;top:70px;" width="34" height="34" viewBox="0 0 34 34"><rect x="1.5" y="1.5" width="31" height="31" fill="#fff" stroke="#444" stroke-width="1.3"/><rect x="1.5" y="1.5" width="31" height="3.5" fill="#7a7a7a"/><path d="M1.5 13h31M1.5 22.5h31M11 5v27.5M22 5v27.5" stroke="#a8a8a8" stroke-width="1"/><circle cx="16" cy="14.3" r="9.6" fill="#f7f7f7" stroke="#444" stroke-width="1.5"/><rect x="10" y="13" width="3" height="6.5" fill="#b0b0b0"/><rect x="13.5" y="9" width="3" height="10.5" fill="#fff" stroke="#444" stroke-width="0.8"/><rect x="17" y="11" width="3.5" height="8.5" fill="#4aa0e6"/><path d="M22.8 21.3l10 10.5" stroke="#444" stroke-width="1.5"/></svg>
<div style="left:918px;top:108.48px;font-size:11.6px;line-height:11.6px;color:#323130;font-weight:normal;white-space:pre;">Analyze</div>
<div style="left:928px;top:124.10px;font-size:11.1px;line-height:11.1px;color:#323130;font-weight:normal;white-space:pre;">Data</div>
<svg style="left:997px;top:151px;" width="11" height="7" viewBox="0 0 11 7"><path d="M1 6l4.5-4.5L10 6" fill="none" stroke="#444" stroke-width="1.2"/></svg>
<div style="left:1px;top:161px;width:1015px;height:1px;background:#d6d6d6"></div>
<div style="left:1px;top:162px;width:1015px;height:66px;background:#e6e6e6"></div>
<div style="left:1px;top:228px;width:26px;height:350px;background:#e6e6e6"></div>
<div style="left:6px;top:172px;width:102px;height:26px;background:#fff;border:1px solid #c8c6c4;box-sizing:border-box"></div>
<div style="left:12.5px;top:178.83px;font-size:13.2px;line-height:13.2px;color:#323130;font-weight:normal;white-space:pre;">A22</div>
<svg style="left:93px;top:182px;" width="9" height="5" viewBox="0 0 9 5"><path d="M0 0h8l-4 4z" fill="#797775"/></svg>
<svg style="left:121px;top:179px;" width="4" height="12" viewBox="0 0 4 12"><circle cx="2" cy="2" r="1" fill="#a19f9d"/><circle cx="2" cy="6" r="1" fill="#a19f9d"/><circle cx="2" cy="10" r="1" fill="#a19f9d"/></svg>
<div style="left:138px;top:172px;width:110px;height:26px;background:#fff;border:1px solid #c8c6c4;box-sizing:border-box"></div>
<svg style="left:150px;top:180px;" width="14" height="12" viewBox="0 0 14 12"><path d="M2 1.5l8.5 8.5M10.5 1.5l-8.5 8.5" stroke="#c2c0be" stroke-width="1.7"/></svg>
<svg style="left:185px;top:179px;" width="16" height="12" viewBox="0 0 16 12"><path d="M1.5 6l4.5 4 8.5-9" fill="none" stroke="#c2c0be" stroke-width="1.9"/></svg>
<svg style="left:221px;top:176px;" width="16" height="16" viewBox="0 0 16 16"><text x="1" y="13.5" font-family="Liberation Serif" font-style="italic" font-weight="bold" font-size="14" fill="#3b3a39">f</text><text x="7" y="12.5" font-family="Liberation Serif" font-style="italic" font-weight="bold" font-size="9.5" fill="#3b3a39">x</text></svg>
<div style="left:251px;top:172px;width:760px;height:26px;background:#fff;border:1px solid #c8c6c4;box-sizing:border-box"></div>
<svg style="left:998px;top:181px;" width="9" height="7" viewBox="0 0 9 7"><path d="M1 1.5l3.5 3.5 3.5-3.5" fill="none" stroke="#605e5c" stroke-width="1.5"/></svg>
<div style="left:27px;top:228px;width:967px;height:349px;background:#fff"></div>
<svg style="left:10px;top:213px;" width="13" height="12" viewBox="0 0 13 12"><path d="M12 0v11H1z" fill="#b3b3b3"/></svg>
<div style="left:27px;top:208px;width:153px;height:19px;background:#d2d2d2"></div>
<div style="left:27px;top:226px;width:154px;height:2px;background:#217346"></div>
<div style="left:180px;top:208px;width:1px;height:19px;background:#bfbfbf"></div>
<div style="left:336px;top:208px;width:1px;height:19px;background:#bfbfbf"></div>
<div style="left:602px;top:208px;width:1px;height:19px;background:#bfbfbf"></div>
<div style="left:752px;top:208px;width:1px;height:19px;background:#bfbfbf"></div>
<div style="left:911px;top:208px;width:1px;height:19px;background:#bfbfbf"></div>
<div style="left:988px;top:208px;width:1px;height:19px;background:#bfbfbf"></div>
<div style="left:26px;top:208px;width:1px;height:369px;background:#ababab"></div>
<div style="left:994px;top:227px;width:1px;height:350px;background:#ababab"></div>
<div style="left:1px;top:227px;width:26px;height:1px;background:#ababab"></div>
<div style="left:181px;top:227px;width:813px;height:1px;background:#bfbfbf"></div>
<div style="left:27px;top:212.44px;width:153px;text-align:center;font-size:12px;line-height:12px;color:#217346">A</div>
<div style="left:181px;top:212.44px;width:155px;text-align:center;font-size:12px;line-height:12px;color:#262626">B</div>
<div style="left:337px;top:212.44px;width:265px;text-align:center;font-size:12px;line-height:12px;color:#262626">C</div>
<div style="left:603px;top:212.44px;width:149px;text-align:center;font-size:12px;line-height:12px;color:#262626">D</div>
<div style="left:753px;top:212.44px;width:158px;text-align:center;font-size:12px;line-height:12px;color:#262626">E</div>
<div style="left:912px;top:212.44px;width:76px;text-align:center;font-size:12px;line-height:12px;color:#262626">F</div>
<div style="left:1px;top:233.02px;width:25px;text-align:center;font-size:12.5px;line-height:12.5px;color:#262626">1</div>
<div style="left:1px;top:247px;width:25px;height:1px;background:#bfbfbf"></div>
<div style="left:1px;top:253.02px;width:25px;text-align:center;font-size:12.5px;line-height:12.5px;color:#262626">2</div>
<div style="left:1px;top:267px;width:25px;height:1px;background:#bfbfbf"></div>
<div style="left:1px;top:273.02px;width:25px;text-align:center;font-size:12.5px;line-height:12.5px;color:#262626">3</div>
<div style="left:1px;top:287px;width:25px;height:1px;background:#bfbfbf"></div>
<div style="left:1px;top:293.02px;width:25px;text-align:center;font-size:12.5px;line-height:12.5px;color:#262626">4</div>
<div style="left:1px;top:307px;width:25px;height:1px;background:#bfbfbf"></div>
<div style="left:1px;top:313.02px;width:25px;text-align:center;font-size:12.5px;line-height:12.5px;color:#262626">5</div>
<div style="left:1px;top:327px;width:25px;height:1px;background:#bfbfbf"></div>
<div style="left:1px;top:333.02px;width:25px;text-align:center;font-size:12.5px;line-height:12.5px;color:#262626">6</div>
<div style="left:1px;top:347px;width:25px;height:1px;background:#bfbfbf"></div>
<div style="left:1px;top:353.02px;width:25px;text-align:center;font-size:12.5px;line-height:12.5px;color:#262626">7</div>
<div style="left:1px;top:367px;width:25px;height:1px;background:#bfbfbf"></div>
<div style="left:1px;top:373.02px;width:25px;text-align:center;font-size:12.5px;line-height:12.5px;color:#262626">8</div>
<div style="left:1px;top:387px;width:25px;height:1px;background:#bfbfbf"></div>
<div style="left:1px;top:393.02px;width:25px;text-align:center;font-size:12.5px;line-height:12.5px;color:#262626">9</div>
<div style="left:1px;top:407px;width:25px;height:1px;background:#bfbfbf"></div>
<div style="left:1px;top:413.02px;width:25px;text-align:center;font-size:12.5px;line-height:12.5px;color:#262626">10</div>
<div style="left:1px;top:427px;width:25px;height:1px;background:#bfbfbf"></div>
<div style="left:1px;top:433.02px;width:25px;text-align:center;font-size:12.5px;line-height:12.5px;color:#262626">11</div>
<div style="left:1px;top:447px;width:25px;height:1px;background:#bfbfbf"></div>
<div style="left:1px;top:453.02px;width:25px;text-align:center;font-size:12.5px;line-height:12.5px;color:#262626">12</div>
<div style="left:1px;top:467px;width:25px;height:1px;background:#bfbfbf"></div>
<div style="left:1px;top:473.02px;width:25px;text-align:center;font-size:12.5px;line-height:12.5px;color:#262626">13</div>
<div style="left:1px;top:487px;width:25px;height:1px;background:#bfbfbf"></div>
<div style="left:1px;top:493.02px;width:25px;text-align:center;font-size:12.5px;line-height:12.5px;color:#262626">14</div>
<div style="left:1px;top:507px;width:25px;height:1px;background:#bfbfbf"></div>
<div style="left:1px;top:513.02px;width:25px;text-align:center;font-size:12.5px;line-height:12.5px;color:#262626">15</div>
<div style="left:1px;top:527px;width:25px;height:1px;background:#bfbfbf"></div>
<div style="left:1px;top:533.02px;width:25px;text-align:center;font-size:12.5px;line-height:12.5px;color:#262626">16</div>
<div style="left:1px;top:547px;width:25px;height:1px;background:#bfbfbf"></div>
<div style="left:1px;top:553.02px;width:25px;text-align:center;font-size:12.5px;line-height:12.5px;color:#262626">17</div>
<div style="left:1px;top:567px;width:25px;height:1px;background:#bfbfbf"></div>
<div style="left:1px;top:573.02px;width:25px;text-align:center;font-size:12.5px;line-height:12.5px;color:#262626">18</div>
<div style="left:1px;top:587px;width:25px;height:1px;background:#bfbfbf"></div>
<div style="left:27px;top:247px;width:967px;height:1px;background:#d9d9d9"></div>
<div style="left:27px;top:267px;width:967px;height:1px;background:#d9d9d9"></div>
<div style="left:27px;top:287px;width:967px;height:1px;background:#d9d9d9"></div>
<div style="left:27px;top:307px;width:967px;height:1px;background:#d9d9d9"></div>
<div style="left:27px;top:327px;width:967px;height:1px;background:#d9d9d9"></div>
<div style="left:27px;top:347px;width:967px;height:1px;background:#d9d9d9"></div>
<div style="left:27px;top:367px;width:967px;height:1px;background:#d9d9d9"></div>
<div style="left:27px;top:387px;width:967px;height:1px;background:#d9d9d9"></div>
<div style="left:27px;top:407px;width:967px;height:1px;background:#d9d9d9"></div>
<div style="left:27px;top:427px;width:967px;height:1px;background:#d9d9d9"></div>
<div style="left:27px;top:447px;width:967px;height:1px;background:#d9d9d9"></div>
<div style="left:27px;top:467px;width:967px;height:1px;background:#d9d9d9"></div>
<div style="left:27px;top:487px;width:967px;height:1px;background:#d9d9d9"></div>
<div style="left:27px;top:507px;width:967px;height:1px;background:#d9d9d9"></div>
<div style="left:27px;top:527px;width:967px;height:1px;background:#d9d9d9"></div>
<div style="left:27px;top:547px;width:967px;height:1px;background:#d9d9d9"></div>
<div style="left:27px;top:567px;width:967px;height:1px;background:#d9d9d9"></div>
<div style="left:180px;top:228px;width:1px;height:349px;background:#d9d9d9"></div>
<div style="left:336px;top:228px;width:1px;height:349px;background:#d9d9d9"></div>
<div style="left:602px;top:228px;width:1px;height:349px;background:#d9d9d9"></div>
<div style="left:752px;top:228px;width:1px;height:349px;background:#d9d9d9"></div>
<div style="left:911px;top:228px;width:1px;height:349px;background:#d9d9d9"></div>
<div style="left:988px;top:228px;width:1px;height:349px;background:#d9d9d9"></div>
<div style="left:27px;top:228px;width:961px;height:19px;background:#4472c4"></div>
<div style="left:29.5px;top:232.37px;font-size:13.15px;line-height:13.15px;color:#ffffff;font-weight:bold;white-space:pre;">Name</div>
<div style="left:183.5px;top:232.65px;font-size:12.82px;line-height:12.82px;color:#ffffff;font-weight:bold;white-space:pre;">Type</div>
<div style="left:339.3px;top:232.88px;font-size:12.54px;line-height:12.54px;color:#ffffff;font-weight:bold;white-space:pre;">Data</div>
<div style="left:606px;top:232.74px;font-size:12.71px;line-height:12.71px;color:#ffffff;font-weight:bold;white-space:pre;">Timestamp</div>
<div style="left:755.5px;top:232.81px;font-size:12.63px;line-height:12.63px;color:#ffffff;font-weight:bold;white-space:pre;">Column1</div>
<div style="left:914px;top:232.61px;font-size:12.86px;line-height:12.86px;color:#ffffff;font-weight:bold;white-space:pre;">Column2</div>
<div style="left:163px;top:229px;width:17px;height:17px;background:#fbfbfb;border:1px solid #b8b8b8;box-sizing:border-box"></div>
<svg style="left:167.5px;top:236px;" width="9" height="5" viewBox="0 0 9 5"><path d="M0 0h7l-3.5 4z" fill="#5f5f5f"/></svg>
<div style="left:319px;top:229px;width:17px;height:17px;background:#fbfbfb;border:1px solid #b8b8b8;box-sizing:border-box"></div>
<svg style="left:323.5px;top:236px;" width="9" height="5" viewBox="0 0 9 5"><path d="M0 0h7l-3.5 4z" fill="#5f5f5f"/></svg>
<div style="left:585px;top:229px;width:17px;height:17px;background:#fbfbfb;border:1px solid #b8b8b8;box-sizing:border-box"></div>
<svg style="left:589.5px;top:236px;" width="9" height="5" viewBox="0 0 9 5"><path d="M0 0h7l-3.5 4z" fill="#5f5f5f"/></svg>
<div style="left:735px;top:229px;width:17px;height:17px;background:#fbfbfb;border:1px solid #b8b8b8;box-sizing:border-box"></div>
<svg style="left:739.5px;top:236px;" width="9" height="5" viewBox="0 0 9 5"><path d="M0 0h7l-3.5 4z" fill="#5f5f5f"/></svg>
<div style="left:894px;top:229px;width:17px;height:17px;background:#fbfbfb;border:1px solid #b8b8b8;box-sizing:border-box"></div>
<svg style="left:898.5px;top:236px;" width="9" height="5" viewBox="0 0 9 5"><path d="M0 0h7l-3.5 4z" fill="#5f5f5f"/></svg>
<div style="left:971px;top:229px;width:17px;height:17px;background:#fbfbfb;border:1px solid #b8b8b8;box-sizing:border-box"></div>
<svg style="left:975.5px;top:236px;" width="9" height="5" viewBox="0 0 9 5"><path d="M0 0h7l-3.5 4z" fill="#5f5f5f"/></svg>
<div style="left:27px;top:247px;width:961px;height:1px;background:#e3e8f5"></div>
<div style="left:27px;top:248px;width:961px;height:19px;background:#d9e1f2"></div>
<div style="left:27px;top:267px;width:961px;height:1px;background:#8ea9db"></div>
<div style="left:27px;top:287px;width:961px;height:1px;background:#8ea9db"></div>
<div style="left:27px;top:288px;width:961px;height:19px;background:#d9e1f2"></div>
<div style="left:27px;top:307px;width:961px;height:1px;background:#8ea9db"></div>
<div style="left:27px;top:327px;width:961px;height:1px;background:#8ea9db"></div>
<div style="left:27px;top:328px;width:961px;height:19px;background:#d9e1f2"></div>
<div style="left:27px;top:347px;width:961px;height:1px;background:#8ea9db"></div>
<div style="left:27px;top:367px;width:961px;height:1px;background:#8ea9db"></div>
<div class="c" style="left:29px;top:252.13px;font-size:13.2px;line-height:13.2px;color:#000000;font-weight:normal;white-space:pre;letter-spacing:0.33px">(same as parent folder)</div>
<div class="c" style="left:183px;top:252.13px;font-size:13.2px;line-height:13.2px;color:#000000;font-weight:normal;white-space:pre;letter-spacing:0.357px">Start of Authority (SOA)</div>
<div class="c" style="left:339px;top:252.13px;font-size:13.2px;line-height:13.2px;color:#000000;font-weight:normal;white-space:pre;letter-spacing:0.096px">[27]</div>
<div class="c" style="left:605px;top:252.13px;font-size:13.2px;line-height:13.2px;color:#000000;font-weight:normal;white-space:pre;letter-spacing:0.139px"> dc01-2022.exoip.local.</div>
<div class="c" style="left:755px;top:252.13px;font-size:13.2px;line-height:13.2px;color:#000000;font-weight:normal;white-space:pre;letter-spacing:0.433px"> hostmaster.exoip.local.</div>
<div class="c" style="left:914px;top:252.13px;font-size:13.2px;line-height:13.2px;color:#000000;font-weight:normal;white-space:pre;letter-spacing:0.248px">static</div>
<div class="c" style="left:29px;top:272.13px;font-size:13.2px;line-height:13.2px;color:#000000;font-weight:normal;white-space:pre;letter-spacing:0.33px">(same as parent folder)</div>
<div class="c" style="left:183px;top:272.13px;font-size:13.2px;line-height:13.2px;color:#000000;font-weight:normal;white-space:pre;letter-spacing:0.034px">Name Server (NS)</div>
<div class="c" style="left:339px;top:272.13px;font-size:13.2px;line-height:13.2px;color:#000000;font-weight:normal;white-space:pre;letter-spacing:0.186px">dc02-2022.exoip.local.</div>
<div class="c" style="left:605px;top:272.13px;font-size:13.2px;line-height:13.2px;color:#000000;font-weight:normal;white-space:pre;letter-spacing:0.248px">static</div>
<div class="c" style="left:29px;top:292.13px;font-size:13.2px;line-height:13.2px;color:#000000;font-weight:normal;white-space:pre;letter-spacing:0.33px">(same as parent folder)</div>
<div class="c" style="left:183px;top:292.13px;font-size:13.2px;line-height:13.2px;color:#000000;font-weight:normal;white-space:pre;letter-spacing:0.034px">Name Server (NS)</div>
<div class="c" style="left:339px;top:292.13px;font-size:13.2px;line-height:13.2px;color:#000000;font-weight:normal;white-space:pre;letter-spacing:0.186px">dc01-2022.exoip.local.</div>
<div class="c" style="left:605px;top:292.13px;font-size:13.2px;line-height:13.2px;color:#000000;font-weight:normal;white-space:pre;letter-spacing:0.248px">static</div>
<div class="c" style="left:29px;top:312.13px;font-size:13.2px;line-height:13.2px;color:#000000;font-weight:normal;white-space:pre;letter-spacing:0.33px">(same as parent folder)</div>
<div class="c" style="left:183px;top:312.13px;font-size:13.2px;line-height:13.2px;color:#000000;font-weight:normal;white-space:pre;letter-spacing:-0.074px">Host (A)</div>
<div class="c" style="left:339px;top:312.13px;font-size:13.2px;line-height:13.2px;color:#000000;font-weight:normal;white-space:pre;letter-spacing:-0.323px">192.168.1.52</div>
<div class="c" style="left:605px;top:312.13px;font-size:13.2px;line-height:13.2px;color:#000000;font-weight:normal;white-space:pre;letter-spacing:0.248px">static</div>
<div class="c" style="left:29px;top:332.13px;font-size:13.2px;line-height:13.2px;color:#000000;font-weight:normal;white-space:pre;letter-spacing:0.33px">(same as parent folder)</div>
<div class="c" style="left:183px;top:332.13px;font-size:13.2px;line-height:13.2px;color:#000000;font-weight:normal;white-space:pre;letter-spacing:-0.074px">Host (A)</div>
<div class="c" style="left:339px;top:332.13px;font-size:13.2px;line-height:13.2px;color:#000000;font-weight:normal;white-space:pre;letter-spacing:-0.323px">192.168.1.20</div>
<div class="c" style="left:605px;top:332.13px;font-size:13.2px;line-height:13.2px;color:#000000;font-weight:normal;white-space:pre;letter-spacing:0.248px">static</div>
<div class="c" style="left:29px;top:352.13px;font-size:13.2px;line-height:13.2px;color:#000000;font-weight:normal;white-space:pre;letter-spacing:0.33px">(same as parent folder)</div>
<div class="c" style="left:183px;top:352.13px;font-size:13.2px;line-height:13.2px;color:#000000;font-weight:normal;white-space:pre;letter-spacing:-0.083px">IPv6 Host (AAAA)</div>
<div class="c" style="left:339px;top:352.13px;font-size:13.2px;line-height:13.2px;color:#000000;font-weight:normal;white-space:pre;letter-spacing:-0.16px">2607:f8b0:400a:0800:0000:0000:0000:200e</div>
<div class="c" style="left:605px;top:352.13px;font-size:13.2px;line-height:13.2px;color:#000000;font-weight:normal;white-space:pre;letter-spacing:0.248px">static</div>
<div style="left:988px;top:228px;width:1px;height:140px;background:#8ea9db"></div>
<div style="left:986px;top:363px;width:2px;height:4px;background:#2f4ba0"></div>
<div style="left:984px;top:365px;width:4px;height:2px;background:#2f4ba0"></div>
<div style="left:1px;top:577px;width:100px;height:1px;background:#9b9b9b"></div>
<div style="left:216px;top:577px;width:779px;height:1px;background:#9b9b9b"></div>
<div style="left:995px;top:208px;width:21px;height:370px;background:#e6e6e6"></div>
<div style="left:998px;top:210px;width:15px;height:15px;background:#fff;border:1px solid #a0a0a0;box-sizing:border-box"></div>
<svg style="left:1001px;top:214px;" width="9" height="6" viewBox="0 0 9 6"><path d="M0 5h8L4 0z" fill="#000"/></svg>
<div style="left:998px;top:225px;width:15px;height:295px;background:#fff;border:1px solid #a0a0a0;box-sizing:border-box"></div>
<div style="left:998px;top:563px;width:15px;height:15px;background:#fff;border:1px solid #a0a0a0;box-sizing:border-box"></div>
<svg style="left:1001px;top:568px;" width="9" height="6" viewBox="0 0 9 6"><path d="M0 0h8L4 5z" fill="#000"/></svg>
<div style="left:1px;top:578px;width:1015px;height:27px;background:#e6e6e6"></div>
<svg style="left:26px;top:586px;" width="7" height="9" viewBox="0 0 7 9"><path d="M6 0v8L1 4z" fill="#b3b3b3"/></svg>
<svg style="left:56px;top:586px;" width="7" height="9" viewBox="0 0 7 9"><path d="M1 0v8l5-4z" fill="#b3b3b3"/></svg>
<div style="left:101px;top:577px;width:115px;height:25px;background:#fff;border-left:1px solid #9b9b9b;border-right:1px solid #9b9b9b;box-sizing:border-box"></div>
<div style="left:101px;top:600px;width:115px;height:2px;background:#217346"></div>
<div style="left:113.7px;top:584.89px;font-size:12.3px;line-height:12.3px;color:#217346;font-weight:bold;white-space:pre;">DNSList_single</div>
<svg style="left:248px;top:582px;" width="18" height="18" viewBox="0 0 18 18"><circle cx="9" cy="9" r="7.6" fill="none" stroke="#605e5c" stroke-width="1.1"/><path d="M9 5v8M5 9h8" stroke="#605e5c" stroke-width="1.6"/></svg>
<svg style="left:609px;top:585px;" width="4" height="12" viewBox="0 0 4 12"><circle cx="2" cy="1.5" r="1" fill="#a0a0a0"/><circle cx="2" cy="5.5" r="1" fill="#a0a0a0"/><circle cx="2" cy="9.5" r="1" fill="#a0a0a0"/></svg>
<div style="left:641px;top:583px;width:354px;height:16px;background:#ececec"></div>
<div style="left:627px;top:583px;width:15px;height:16px;background:#fff;border:1px solid #a0a0a0;box-sizing:border-box"></div>
<svg style="left:631px;top:587px;" width="6" height="9" viewBox="0 0 6 9"><path d="M5 0v8L0 4z" fill="#000"/></svg>
<div style="left:641px;top:583px;width:300px;height:16px;background:#fff;border:1px solid #a0a0a0;box-sizing:border-box"></div>
<div style="left:980px;top:583px;width:15px;height:16px;background:#fff;border:1px solid #a0a0a0;box-sizing:border-box"></div>
<svg style="left:985px;top:587px;" width="6" height="9" viewBox="0 0 6 9"><path d="M0 0v8l5-4z" fill="#000"/></svg>
<div style="left:1px;top:605px;width:1015px;height:1px;background:#c8c6c4"></div>
<div style="left:1px;top:606px;width:1015px;height:21px;background:#f3f2f1"></div>
<div style="left:13.4px;top:611.50px;font-size:10.4px;line-height:10.4px;color:#444444;font-weight:normal;white-space:pre;">Ready</div>
<div style="left:705px;top:606px;width:40px;height:21px;background:#d2d0ce"></div>
<svg style="left:717px;top:608px;" width="16" height="16" viewBox="0 0 16 16"><rect x="1.5" y="1.5" width="12" height="12" fill="none" stroke="#3b3a39" stroke-width="1.3"/><path d="M5.5 1.5v12M9.5 1.5v12M1.5 5.5h12M1.5 9.5h12" stroke="#3b3a39" stroke-width="1.3"/></svg>
<svg style="left:757px;top:608px;" width="16" height="16" viewBox="0 0 16 16"><rect x="1.5" y="1.5" width="13" height="12" fill="none" stroke="#3b3a39" stroke-width="1.2"/><rect x="4.5" y="3.5" width="7" height="8" fill="none" stroke="#3b3a39" stroke-width="1"/><path d="M6 5.5h4M6 7.5h4M6 9.5h4" stroke="#3b3a39" stroke-width="1"/></svg>
<svg style="left:797px;top:608px;" width="16" height="16" viewBox="0 0 16 16"><rect x="1.5" y="1.5" width="13" height="12" fill="none" stroke="#3b3a39" stroke-width="1.2"/><path d="M1.5 8.5h9v-7M6 1.5v7" fill="none" stroke="#3b3a39" stroke-width="1.2"/></svg>
<div style="left:831px;top:615px;width:8px;height:1px;background:#444"></div>
<div style="left:844px;top:616px;width:100px;height:1px;background:#605e5c"></div>
<div style="left:892px;top:611px;width:5px;height:11px;background:#3b3a39"></div>
<div style="left:949px;top:616px;width:8px;height:1px;background:#444"></div>
<div style="left:952.5px;top:612.5px;width:1px;height:8px;background:#444"></div>
<div style="left:970.3px;top:611.70px;font-size:10.4px;line-height:10.4px;color:#444444;font-weight:normal;white-space:pre;">100%</div>
</body></html>
